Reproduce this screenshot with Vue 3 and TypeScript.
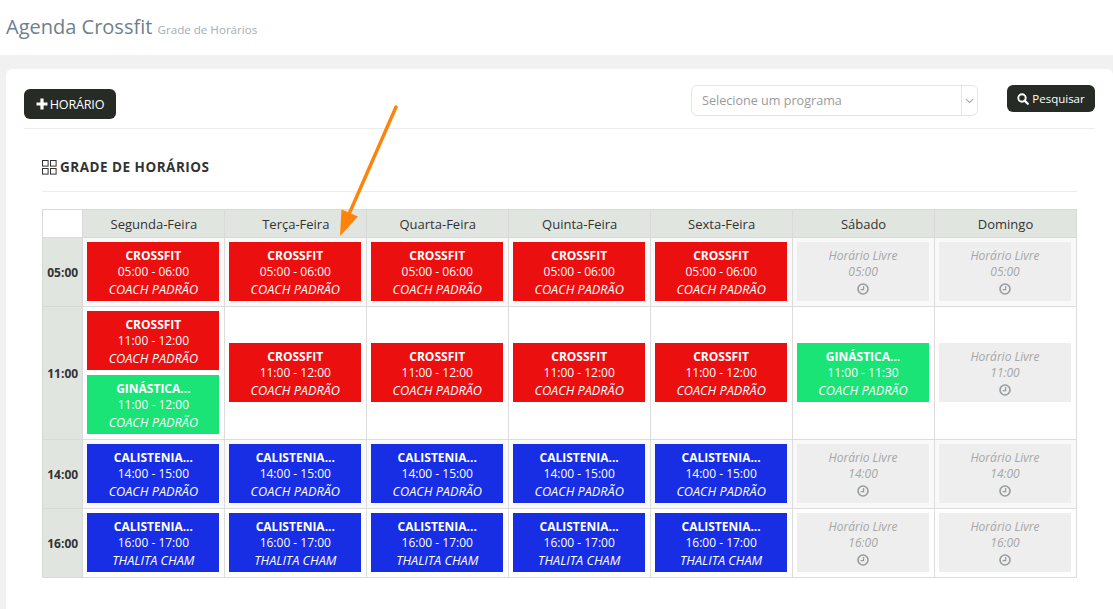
<script setup lang="ts">
type Slot = { kind: 'red' | 'green' | 'blue' | 'free'; name?: string; time: string; coach?: string }
type Row = { hour: string; striped: boolean; cells: Slot[][] }

const days = ['Segunda-Feira', 'Terça-Feira', 'Quarta-Feira', 'Quinta-Feira', 'Sexta-Feira', 'Sábado', 'Domingo']

const c = (kind: Slot['kind'], name: string, time: string, coach: string): Slot => ({ kind, name, time, coach })
const free = (time: string): Slot => ({ kind: 'free', time })

function week(make: () => Slot[], sat: Slot[], sun: Slot[]): Slot[][] {
  return [make(), make(), make(), make(), make(), sat, sun]
}

const cross = (t: string) => c('red', 'CROSSFIT', t, 'COACH PADRÃO')
const cali = (t: string, coach: string) => c('blue', 'CALISTENIA...', t, coach)

const rows: Row[] = [
  { hour: '05:00', striped: true, cells: week(() => [cross('05:00 - 06:00')], [free('05:00')], [free('05:00')]) },
  {
    hour: '11:00',
    striped: false,
    cells: [
      [cross('11:00 - 12:00'), c('green', 'GINÁSTICA...', '11:00 - 12:00', 'COACH PADRÃO')],
      [cross('11:00 - 12:00')],
      [cross('11:00 - 12:00')],
      [cross('11:00 - 12:00')],
      [cross('11:00 - 12:00')],
      [c('green', 'GINÁSTICA...', '11:00 - 11:30', 'COACH PADRÃO')],
      [free('11:00')],
    ],
  },
  { hour: '14:00', striped: true, cells: week(() => [cali('14:00 - 15:00', 'COACH PADRÃO')], [free('14:00')], [free('14:00')]) },
  { hour: '16:00', striped: false, cells: week(() => [cali('16:00 - 17:00', 'THALITA CHAM')], [free('16:00')], [free('16:00')]) },
]
</script>

<template>
  <div class="page">
    <header class="page-head">
      <h1 class="title">Agenda Crossfit <small class="subtitle">Grade de Horários</small></h1>
    </header>

    <main class="panel">
      <div class="toolbar">
        <button class="btn btn-add" type="button">
          <svg class="plus" viewBox="0 0 12 12" width="12" height="12" aria-hidden="true">
            <path d="M4.4 0.5h3.2v3.9h3.9v3.2H7.6v3.9H4.4V7.6H0.5V4.4h3.9z" fill="#fff" />
          </svg>
          <span>HORÁRIO</span>
        </button>
        <div class="filters">
          <div class="select">
            <span class="select-text">Selecione um programa</span>
            <span class="select-arrow">
              <svg viewBox="0 0 10 6" width="9" height="6" aria-hidden="true">
                <path d="M1 1l4 3.6L9 1" fill="none" stroke="#a9a9a9" stroke-width="1.2" />
              </svg>
            </span>
          </div>
          <button class="btn btn-search" type="button">
            <svg viewBox="0 0 12 12" width="12" height="12" aria-hidden="true">
              <circle cx="5" cy="5" r="3.7" fill="none" stroke="#fff" stroke-width="1.9" />
              <path d="M7.6 7.6l3.2 3.2" stroke="#fff" stroke-width="2.2" stroke-linecap="round" />
            </svg>
            <span>Pesquisar</span>
          </button>
        </div>
      </div>

      <section class="grade">
        <h2 class="grade-title">
          <svg viewBox="0 0 15 15" width="15" height="15" aria-hidden="true">
            <g fill="none" stroke="#333" stroke-width="1">
              <rect x="0.5" y="0.5" width="5.6" height="5.6" />
              <rect x="8.5" y="0.5" width="5.6" height="5.6" />
              <rect x="0.5" y="8.5" width="5.6" height="5.6" />
              <rect x="8.5" y="8.5" width="5.6" height="5.6" />
            </g>
          </svg>
          <span>GRADE DE HORÁRIOS</span>
        </h2>

        <table class="schedule">
          <colgroup>
            <col class="col-hour" />
            <col v-for="d in days" :key="d" />
          </colgroup>
          <thead>
            <tr>
              <th class="corner"></th>
              <th v-for="d in days" :key="d">{{ d }}</th>
            </tr>
          </thead>
          <tbody>
            <tr v-for="r in rows" :key="r.hour" :class="{ striped: r.striped }">
              <th class="hour">{{ r.hour }}</th>
              <td v-for="(cell, i) in r.cells" :key="i">
                <div class="stack">
                  <template v-for="(s, j) in cell" :key="j">
                    <div v-if="s.kind === 'free'" class="slot free">
                      <div>Horário Livre</div>
                      <div>{{ s.time }}</div>
                      <svg class="clock" viewBox="0 0 12 12" width="12" height="12" aria-hidden="true">
                        <circle cx="6" cy="6" r="5" fill="none" stroke="#969c9e" stroke-width="1.6" />
                        <path d="M6.6 3v3.6H3.6" fill="none" stroke="#969c9e" stroke-width="1.2" />
                      </svg>
                    </div>
                    <div v-else class="slot" :class="s.kind">
                      <div class="slot-name">{{ s.name }}</div>
                      <div>{{ s.time }}</div>
                      <div class="slot-coach">{{ s.coach }}</div>
                    </div>
                  </template>
                </div>
              </td>
            </tr>
          </tbody>
        </table>
      </section>

      <svg class="arrow" viewBox="0 0 70 140" width="70" height="140" aria-hidden="true">
        <path d="M56 2L9.5 108" fill="none" stroke="#ff8308" stroke-width="3.4" stroke-linecap="round" />
        <path d="M0 131L1.5 104.5L18 111.5Z" fill="#ff8308" />
      </svg>
    </main>
  </div>
</template>

<style>
html,
body {
  margin: 0;
  background: #f1f1f1;
}
</style>

<style scoped>
.page {
  font-family: 'Open Sans', 'Liberation Sans', sans-serif;
  min-height: 609px;
  height: 609px;
  overflow: hidden;
  background: #f1f1f1;
  display: flex;
  flex-direction: column;
}
.page-head {
  background: #fff;
  height: 55px;
  flex: none;
  padding: 13px 0 0 6px;
  box-sizing: border-box;
}
.title {
  margin: 0;
  font-size: 20px;
  line-height: 27px;
  font-weight: 400;
  color: #6f7f8c;
}
.subtitle {
  font-size: 11.6px;
  color: #a2adb5;
}
.panel {
  position: relative;
  flex: 1;
  margin: 14px 0 0 6px;
  background: #fff;
  border-radius: 6px 6px 0 0;
  padding: 16px 18px 0;
}
.toolbar {
  display: flex;
  justify-content: space-between;
  align-items: flex-start;
  height: 43px;
  border-bottom: 1px solid #ececec;
}
.btn {
  display: inline-flex;
  align-items: center;
  border: 0;
  border-radius: 6px;
  background: #272b25;
  color: #fff;
  font-family: inherit;
  cursor: pointer;
  padding: 0;
}
.btn-add {
  margin-top: 4px;
  width: 92px;
  height: 30px;
  justify-content: center;
  gap: 2px;
  font-size: 12.6px;
  letter-spacing: -0.2px;
}
.plus {
  flex: none;
}
.filters {
  display: flex;
  align-items: flex-start;
  gap: 29px;
}
.select {
  width: 287px;
  height: 31px;
  box-sizing: border-box;
  border: 1px solid #e4e4e4;
  border-radius: 6px;
  display: flex;
  align-items: center;
  background: #fff;
}
.select-text {
  flex: 1;
  padding-left: 10px;
  font-size: 12.6px;
  color: #9a9a9a;
}
.select-arrow {
  flex: none;
  width: 15px;
  height: 100%;
  border-left: 1px solid #e4e4e4;
  display: flex;
  align-items: center;
  justify-content: center;
}
.btn-search {
  width: 88px;
  height: 27px;
  justify-content: center;
  gap: 3px;
  font-size: 11.5px;
}
.grade {
  padding: 0 18px;
}
.grade-title {
  margin: 0 0 17px;
  height: 63px;
  box-sizing: border-box;
  padding-top: 29px;
  border-bottom: 1px solid #ececec;
  display: flex;
  align-items: flex-start;
  gap: 3px;
  font-size: 13.5px;
  line-height: 18px;
  font-weight: 700;
  letter-spacing: 0.5px;
  color: #333;
}
.grade-title svg {
  margin-top: 2px;
  flex: none;
}
.schedule {
  width: 1035px;
  table-layout: fixed;
  border-collapse: collapse;
  border: 1px solid #ddd;
  font-size: 12px;
}
.col-hour {
  width: 40.4px;
}
thead th {
  height: 28px;
  padding: 0;
  background: #e1e5e0;
  border: 1px solid #d9d9d9;
  font-size: 13px;
  font-weight: 400;
  color: #333;
  box-sizing: border-box;
}
thead th.corner {
  background: #fff;
}
.hour {
  padding: 0;
  background: #e1e5e0;
  border: 1px solid #d9d9d9;
  font-size: 12px;
  font-weight: 700;
  color: #333;
}
td {
  padding: 4px 5px 5px 4px;
  border: 1px solid #dcdcdc;
  vertical-align: middle;
}
tr.striped td {
  background: #f9f9f9;
}
.stack {
  display: flex;
  flex-direction: column;
  gap: 5px;
}
.slot {
  height: 59px;
  box-sizing: border-box;
  padding-top: 5.5px;
  text-align: center;
  font-size: 12px;
  line-height: 16.5px;
  color: #fff;
}
.slot-name {
  font-weight: 700;
}
.slot-coach {
  font-style: italic;
  font-size: 12.7px;
}
.red {
  background: #eb0f0f;
}
.green {
  background: #1ae475;
}
.blue {
  background: #172ee5;
}
.free {
  background: #eeeeee;
  color: #a6a6a6;
  font-style: italic;
}
.clock {
  display: block;
  margin: 2px auto 0;
}
.arrow {
  position: absolute;
  left: 334px;
  top: 36px;
  pointer-events: none;
}
</style>
